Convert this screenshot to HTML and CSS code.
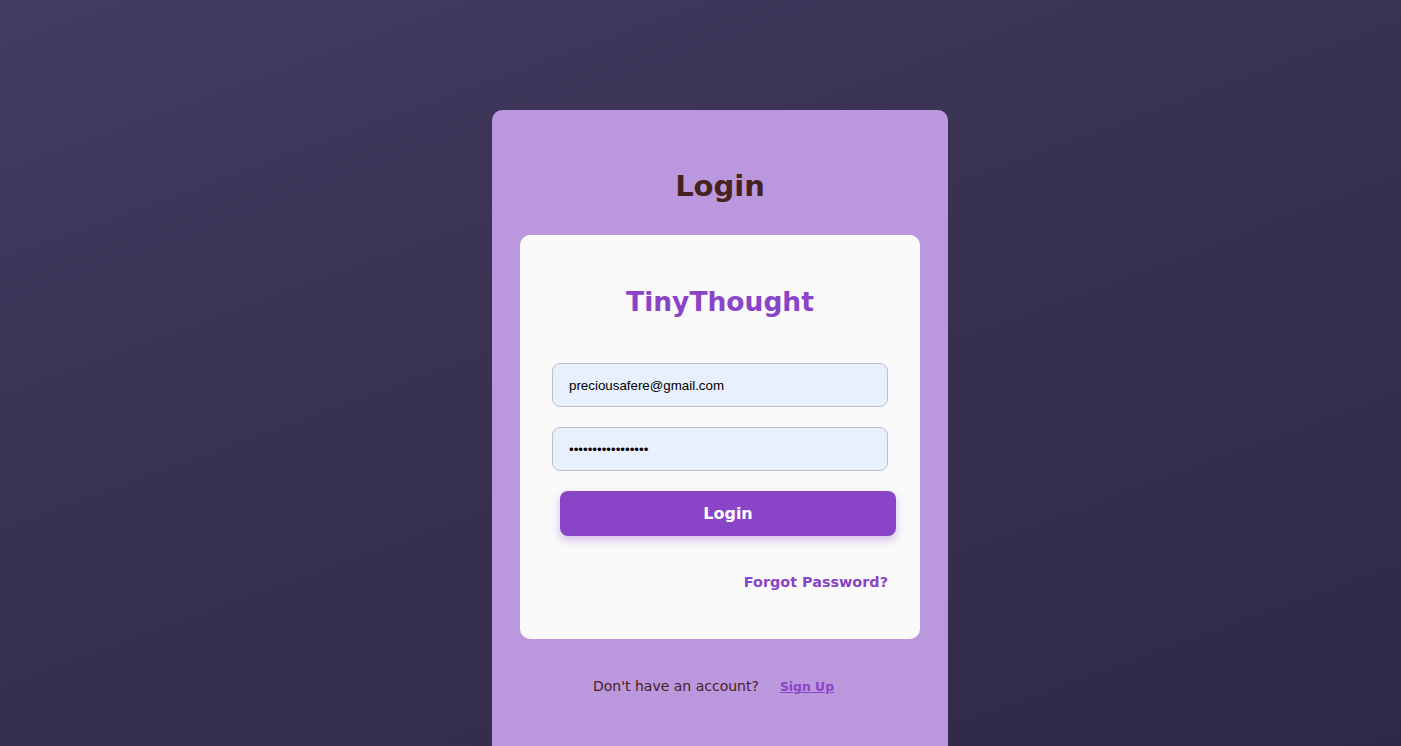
FILE: index.html
```html
<!DOCTYPE html>
<html lang="en">
<head>
<meta charset="utf-8">
<title>Login - TinyThought</title>
<link rel="stylesheet" href="styles.css">
</head>
<body>
<main class="page">
  <section class="card">
    <h1 class="title">Login</h1>
    <div class="panel">
      <h2 class="brand">TinyThought</h2>
      <form class="form">
        <input class="field" type="email" value="preciousafere@gmail.com">
        <input class="field" type="password" value="preciousafere1234">
        <button class="btn" type="button">Login</button>
      </form>
      <div class="forgot-row"><a class="forgot" href="#">Forgot Password?</a></div>
    </div>
    <div class="footer">
      <span class="footer-text">Don't have an account?</span>
      <a class="signup" href="#">Sign Up</a>
    </div>
  </section>
</main>
</body>
</html>
```
FILE: styles.css
```css
html, body {
  margin: 0;
  height: 100%;
  overflow: hidden;
}
body {
  background: linear-gradient(160deg, #433b62 0%, #38304f 50%, #2f2947 100%);
  font-family: "DejaVu Sans", Verdana, sans-serif;
}
.page {
  display: flex;
  justify-content: center;
  padding-top: 110px;
  padding-left: 39px;
}
.card {
  width: 456px;
  box-sizing: border-box;
  background: #bb97de;
  border-radius: 10px;
  padding: 58px 28px 80px;
}
.title {
  margin: 0 0 31px;
  text-align: center;
  font-size: 29px;
  line-height: 36px;
  font-weight: bold;
  color: #46221f;
}
.panel {
  background: #fafafa;
  border-radius: 10px;
  padding: 50px 32px 47px;
}
.brand {
  margin: 0 0 44px;
  text-align: center;
  font-size: 26.5px;
  line-height: 34px;
  font-weight: bold;
  color: #8a44c8;
}
.form {
  display: flex;
  flex-direction: column;
  gap: 20px;
}
.field {
  box-sizing: border-box;
  width: 336px;
  height: 44px;
  margin: 0;
  padding: 0 16px;
  border: 1px solid #bfbfc4;
  border-radius: 8px;
  background: #e8f0fe;
  font-family: "Liberation Sans", Arial, sans-serif;
  font-size: 13.33px;
  color: #000;
  outline: none;
}
.btn {
  box-sizing: border-box;
  width: 336px;
  height: 45px;
  margin: 0 0 0 8px;
  border: none;
  border-radius: 8px;
  background: #8a44c8;
  color: #fff;
  font-family: "DejaVu Sans", Verdana, sans-serif;
  font-size: 16px;
  font-weight: bold;
  box-shadow: 0 4px 10px rgba(138, 68, 200, 0.35);
}
.forgot-row {
  display: flex;
  justify-content: flex-end;
  margin-top: 36px;
  line-height: 20px;
}
.forgot {
  color: #8a44c8;
  font-size: 14.4px;
  font-weight: bold;
  text-decoration: none;
}
.footer {
  display: flex;
  justify-content: center;
  align-items: center;
  gap: 21px;
  margin-top: 36px;
  padding-right: 13px;
  line-height: 20px;
}
.footer-text {
  font-size: 14px;
  color: #46221f;
}
.signup {
  font-size: 12.4px;
  font-weight: bold;
  color: #8a44c8;
  text-decoration: underline;
  margin-top: 2px;
}
```
